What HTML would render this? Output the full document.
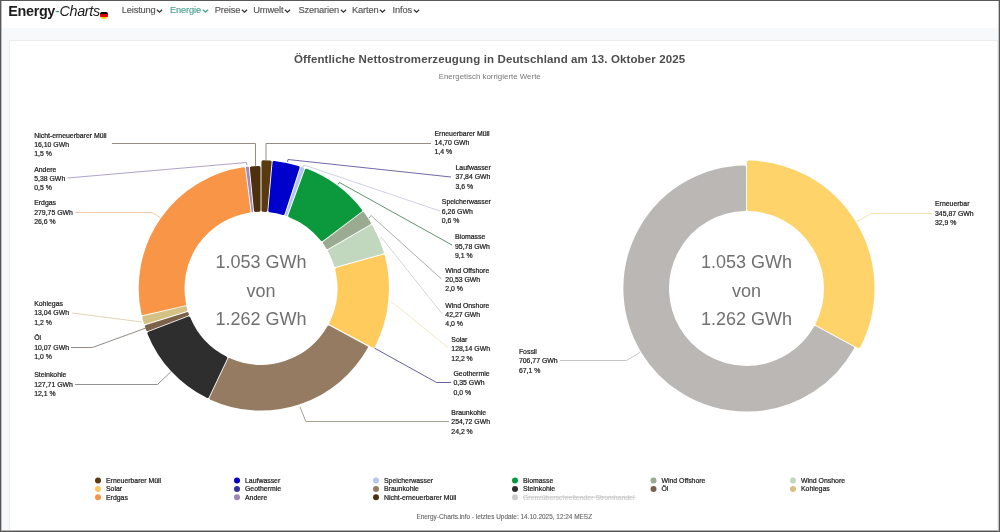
<!DOCTYPE html>
<html><head><meta charset="utf-8">
<style>
*{margin:0;padding:0;box-sizing:border-box}
html,body{width:1000px;height:532px;overflow:hidden;background:#f8f9fa;font-family:"Liberation Sans",sans-serif}
#wrap{position:absolute;left:0;top:0;width:1000px;height:532px;will-change:transform}
#frame{position:absolute;left:0;top:0;width:1000px;height:532px;border:1px solid #585858;box-shadow:inset 1px 0 0 #bdbdbd, inset -1px 0 0 #c4c4c4, inset 0 -1px 0 #b0b0b0;z-index:10;pointer-events:none}
#nav{position:absolute;left:0;top:0;width:1000px;height:28px;background:#fff}
#logo{position:absolute;left:8.3px;top:3.2px;font-size:14.4px;line-height:17px;color:#1e1e1e;white-space:nowrap;letter-spacing:-0.35px}
#logo b{font-weight:bold}
#logo .d{color:#3a9a8c}
#logo i{font-style:italic}
#flag{position:absolute;left:100px;top:12px;width:8px;height:7px;border-radius:2px 2px 4px 4px;overflow:hidden}
#flag div{height:33.4%}
.nv{position:absolute;top:5px;line-height:11px;font-size:9.3px;letter-spacing:-0.15px;color:#555;-webkit-text-stroke:0.15px currentColor;white-space:nowrap}
.nv.a{color:#4aa292}
.nv svg{display:inline-block;vertical-align:middle;margin-left:1px}
#card{position:absolute;left:9px;top:39.5px;width:989px;height:493px;background:#fff;border:1px solid #eaebed;border-right-color:#f0f1f2}
#title{position:absolute;left:0;top:52px;width:979.2px;line-height:14px;text-align:center;font-size:11.5px;letter-spacing:0.12px;color:#4e4e4e;font-weight:bold;white-space:nowrap}
#sub{position:absolute;left:0;top:72px;width:979.4px;line-height:9px;text-align:center;font-size:7.9px;color:#777;white-space:nowrap}
#foot{position:absolute;left:0;top:513px;width:1008.5px;line-height:8px;text-align:center;font-size:6.45px;color:#666;-webkit-text-stroke:0.12px #666;white-space:nowrap}
svg#chart{position:absolute;left:0;top:0}
.lb{font-size:6.9px;fill:#1c1c1c;stroke:#1c1c1c;stroke-width:0.22px}
.ct{font-size:18px;fill:#707070}
.lg{font-size:6.9px;fill:#1e1e1e;stroke:#1e1e1e;stroke-width:0.22px}
.lg.off{fill:#c8c8c8;stroke:#c8c8c8;stroke-width:0.1px}
</style></head><body><div id="wrap">
<div id="nav">
  <div id="logo"><b>Energy</b><span class="d">-</span><i>Charts</i></div>
  <div id="flag"><div style="background:#000"></div><div style="background:#dd0000"></div><div style="background:#ffce00"></div></div>
  <div class="nv" style="left:121.7px">Leistung<svg width="7" height="6" viewBox="0 0 7 6" style="margin-left:0.5px;vertical-align:-0.5px"><path d="M0.9,1.7 L3.5,4.2 L6.1,1.7" fill="none" stroke="#333" stroke-width="1.3"/></svg></div>
<div class="nv a" style="left:170px">Energie<svg width="7" height="6" viewBox="0 0 7 6" style="margin-left:0.5px;vertical-align:-0.5px"><path d="M0.9,1.7 L3.5,4.2 L6.1,1.7" fill="none" stroke="#4aa292" stroke-width="1.3"/></svg></div>
<div class="nv" style="left:214.8px">Preise<svg width="7" height="6" viewBox="0 0 7 6" style="margin-left:0.5px;vertical-align:-0.5px"><path d="M0.9,1.7 L3.5,4.2 L6.1,1.7" fill="none" stroke="#333" stroke-width="1.3"/></svg></div>
<div class="nv" style="left:253.3px">Umwelt<svg width="7" height="6" viewBox="0 0 7 6" style="margin-left:0.5px;vertical-align:-0.5px"><path d="M0.9,1.7 L3.5,4.2 L6.1,1.7" fill="none" stroke="#333" stroke-width="1.3"/></svg></div>
<div class="nv" style="left:298.5px">Szenarien<svg width="7" height="6" viewBox="0 0 7 6" style="margin-left:0.5px;vertical-align:-0.5px"><path d="M0.9,1.7 L3.5,4.2 L6.1,1.7" fill="none" stroke="#333" stroke-width="1.3"/></svg></div>
<div class="nv" style="left:352px">Karten<svg width="7" height="6" viewBox="0 0 7 6" style="margin-left:0.5px;vertical-align:-0.5px"><path d="M0.9,1.7 L3.5,4.2 L6.1,1.7" fill="none" stroke="#333" stroke-width="1.3"/></svg></div>
<div class="nv" style="left:392.6px">Infos<svg width="7" height="6" viewBox="0 0 7 6" style="margin-left:0.5px;vertical-align:-0.5px"><path d="M0.9,1.7 L3.5,4.2 L6.1,1.7" fill="none" stroke="#333" stroke-width="1.3"/></svg></div>

</div>
<div id="card"></div>
<div id="title">Öffentliche Nettostromerzeugung in Deutschland am 13. Oktober 2025</div>
<div id="sub">Energetisch korrigierte Werte</div>
<svg id="chart" width="1000" height="532" viewBox="0 0 1000 532">
<path d="M263.05,161.92 A126.40,126.40 0 0 1 270.03,162.22 L265.80,210.35 A78.10,78.10 0 0 0 263.05,210.23 Z" fill="#5a3a10" stroke="#5a3a10" stroke-width="3.20" stroke-linejoin="round"/>
<path d="M274.12,162.58 A126.40,126.40 0 0 1 298.04,167.45 L283.14,213.40 A78.10,78.10 0 0 0 269.88,210.71 Z" fill="#0000cd" stroke="#0000cd" stroke-width="3.20" stroke-linejoin="round"/>
<path d="M301.45,167.74 A127.17,127.17 0 0 1 303.52,168.45 L286.38,215.25 A77.33,77.33 0 0 0 286.07,215.15 Z" fill="#b4c6f0" stroke="#b4c6f0" stroke-width="1.66" stroke-linejoin="round"/>
<path d="M306.38,170.33 A126.40,126.40 0 0 1 360.52,210.37 L322.00,239.53 A78.10,78.10 0 0 0 289.77,215.69 Z" fill="#0c983c" stroke="#0c983c" stroke-width="3.20" stroke-linejoin="round"/>
<path d="M362.99,213.64 A126.40,126.40 0 0 1 369.30,223.12 L327.51,247.36 A78.10,78.10 0 0 0 324.48,242.80 Z" fill="#9aab92" stroke="#9aab92" stroke-width="3.20" stroke-linejoin="round"/>
<path d="M371.36,226.67 A126.40,126.40 0 0 1 382.14,252.22 L335.62,265.26 A78.10,78.10 0 0 0 329.56,250.90 Z" fill="#c2d8be" stroke="#c2d8be" stroke-width="3.20" stroke-linejoin="round"/>
<path d="M383.25,256.17 A126.40,126.40 0 0 1 373.38,346.15 L330.80,323.35 A78.10,78.10 0 0 0 336.73,269.20 Z" fill="#ffcb5c" stroke="#ffcb5c" stroke-width="3.20" stroke-linejoin="round"/>
<path d="M366.30,347.29 A120.70,120.70 0 0 1 211.09,398.20 L229.36,359.71 A78.10,78.10 0 0 0 328.78,327.10 Z" fill="#947b61" stroke="#947b61" stroke-width="3.20" stroke-linejoin="round"/>
<path d="M207.38,396.44 A120.70,120.70 0 0 1 149.01,333.31 L188.81,318.10 A78.10,78.10 0 0 0 225.66,357.95 Z" fill="#2e2e2e" stroke="#2e2e2e" stroke-width="3.20" stroke-linejoin="round"/>
<path d="M147.53,329.52 A120.73,120.73 0 0 1 146.47,326.49 L187.17,313.67 A78.07,78.07 0 0 0 187.38,314.28 Z" fill="#7b6249" stroke="#7b6249" stroke-width="3.14" stroke-linejoin="round"/>
<path d="M145.27,322.59 A120.70,120.70 0 0 1 143.88,317.49 L185.40,307.89 A78.10,78.10 0 0 0 185.92,309.80 Z" fill="#d5c184" stroke="#d5c184" stroke-width="3.20" stroke-linejoin="round"/>
<path d="M142.96,313.49 A120.70,120.70 0 0 1 243.54,168.87 L248.98,211.13 A78.10,78.10 0 0 0 184.47,303.89 Z" fill="#f89546" stroke="#f89546" stroke-width="3.20" stroke-linejoin="round"/>
<path d="M246.55,167.52 A121.64,121.64 0 0 1 248.22,167.33 L252.49,211.61 A77.16,77.16 0 0 0 252.24,211.64 Z" fill="#a189bb" stroke="#a189bb" stroke-width="1.32" stroke-linejoin="round"/>
<path d="M251.46,167.98 A120.70,120.70 0 0 1 258.95,167.62 L258.95,210.23 A78.10,78.10 0 0 0 255.55,210.39 Z" fill="#4d310e" stroke="#4d310e" stroke-width="3.20" stroke-linejoin="round"/>
<path d="M748.55,162.12 A126.40,126.40 0 0 1 858.76,346.59 L817.10,324.17 A79.10,79.10 0 0 0 748.55,209.43 Z" fill="#fdd36a" stroke="#fdd36a" stroke-width="3.20" stroke-linejoin="round"/>
<path d="M852.50,347.87 A121.50,121.50 0 1 1 744.45,167.02 L744.45,209.43 A79.10,79.10 0 1 0 815.16,327.78 Z" fill="#bbb7b4" stroke="#bbb7b4" stroke-width="3.20" stroke-linejoin="round"/>
<path d="M266.0,161.0 L266.0,143.5 L431.0,143.5" fill="none" stroke="#8d877c" stroke-width="0.95"/>
<path d="M255.5,166.0 L255.5,143.5 L112.0,143.5" fill="none" stroke="#8d877c" stroke-width="0.95"/>
<path d="M287.5,162.0 L288.0,159.5 L451.0,177.0" fill="none" stroke="#6a5fa0" stroke-width="0.95"/>
<path d="M303.0,167.0 L304.0,165.0 L440.0,211.0" fill="none" stroke="#cdd0e0" stroke-width="0.95"/>
<path d="M338.0,184.5 L339.5,182.5 L452.0,245.0" fill="none" stroke="#5a8c68" stroke-width="0.95"/>
<path d="M369.0,218.0 L371.0,215.5 L441.5,279.0" fill="none" stroke="#a3aa9f" stroke-width="0.95"/>
<path d="M380.0,239.5 L381.5,237.5 L442.5,314.3" fill="none" stroke="#cfd8cc" stroke-width="0.95"/>
<path d="M391.0,302.0 L394.5,304.0 L448.4,348.0" fill="none" stroke="#f3e6c0" stroke-width="0.95"/>
<path d="M374.6,348.2 L436.6,382.5 L451.0,382.5" fill="none" stroke="#5a5a98" stroke-width="0.95"/>
<path d="M300.0,406.8 L305.8,421.5 L449.0,421.5" fill="none" stroke="#a29a8e" stroke-width="0.95"/>
<path d="M171.0,371.7 L157.5,384.5 L75.0,384.5" fill="none" stroke="#8c8c8c" stroke-width="0.95"/>
<path d="M146.0,328.0 L92.4,347.5 L71.0,347.5" fill="none" stroke="#8a847c" stroke-width="0.95"/>
<path d="M142.0,322.0 L71.7,313.0" fill="none" stroke="#ddd2b0" stroke-width="0.95"/>
<path d="M160.0,217.5 L152.0,212.5 L75.0,212.5" fill="none" stroke="#f3c4a0" stroke-width="0.95"/>
<path d="M247.0,165.0 L246.5,162.5 L67.5,178.0" fill="none" stroke="#ab9dc6" stroke-width="0.95"/>
<path d="M857.0,221.6 L871.0,213.5 L931.6,213.5" fill="none" stroke="#f3e2a6" stroke-width="0.95"/>
<path d="M640.0,352.4 L626.4,360.5 L560.0,360.5" fill="none" stroke="#c6c3c0" stroke-width="0.95"/>
<text x="34.2" y="137.5" class="lb">Nicht-erneuerbarer Müll</text>
<text x="34.2" y="146.9" class="lb">16,10 GWh</text>
<text x="34.2" y="156.3" class="lb">1,5 %</text>
<text x="34.2" y="171.5" class="lb">Andere</text>
<text x="34.2" y="180.9" class="lb">5,38 GWh</text>
<text x="34.2" y="190.3" class="lb">0,5 %</text>
<text x="34.2" y="205.2" class="lb">Erdgas</text>
<text x="34.2" y="214.6" class="lb">279,75 GWh</text>
<text x="34.2" y="224.0" class="lb">26,6 %</text>
<text x="34.2" y="306.0" class="lb">Kohlegas</text>
<text x="34.2" y="315.4" class="lb">13,04 GWh</text>
<text x="34.2" y="324.8" class="lb">1,2 %</text>
<text x="34.2" y="340.1" class="lb">Öl</text>
<text x="34.2" y="349.5" class="lb">10,07 GWh</text>
<text x="34.2" y="358.9" class="lb">1,0 %</text>
<text x="34.2" y="377.4" class="lb">Steinkohle</text>
<text x="34.2" y="386.8" class="lb">127,71 GWh</text>
<text x="34.2" y="396.2" class="lb">12,1 %</text>
<text x="434.5" y="135.5" class="lb">Erneuerbarer Müll</text>
<text x="434.5" y="144.9" class="lb">14,70 GWh</text>
<text x="434.5" y="154.3" class="lb">1,4 %</text>
<text x="455.5" y="170.0" class="lb">Laufwasser</text>
<text x="455.5" y="179.4" class="lb">37,84 GWh</text>
<text x="455.5" y="188.8" class="lb">3,6 %</text>
<text x="441.8" y="204.2" class="lb">Speicherwasser</text>
<text x="441.8" y="213.6" class="lb">6,26 GWh</text>
<text x="441.8" y="223.0" class="lb">0,6 %</text>
<text x="455.0" y="239.2" class="lb">Biomasse</text>
<text x="455.0" y="248.6" class="lb">95,78 GWh</text>
<text x="455.0" y="258.0" class="lb">9,1 %</text>
<text x="445.3" y="272.5" class="lb">Wind Offshore</text>
<text x="445.3" y="281.9" class="lb">20,53 GWh</text>
<text x="445.3" y="291.3" class="lb">2,0 %</text>
<text x="445.3" y="307.5" class="lb">Wind Onshore</text>
<text x="445.3" y="316.9" class="lb">42,27 GWh</text>
<text x="445.3" y="326.3" class="lb">4,0 %</text>
<text x="451.3" y="341.9" class="lb">Solar</text>
<text x="451.3" y="351.3" class="lb">128,14 GWh</text>
<text x="451.3" y="360.7" class="lb">12,2 %</text>
<text x="453.5" y="375.8" class="lb">Geothermie</text>
<text x="453.5" y="385.2" class="lb">0,35 GWh</text>
<text x="453.5" y="394.6" class="lb">0,0 %</text>
<text x="451.3" y="414.8" class="lb">Braunkohle</text>
<text x="451.3" y="424.2" class="lb">254,72 GWh</text>
<text x="451.3" y="433.6" class="lb">24,2 %</text>
<text x="935.0" y="206.3" class="lb">Erneuerbar</text>
<text x="935.0" y="215.7" class="lb">345,87 GWh</text>
<text x="935.0" y="225.1" class="lb">32,9 %</text>
<text x="518.9" y="353.7" class="lb">Fossil</text>
<text x="518.9" y="363.1" class="lb">706,77 GWh</text>
<text x="518.9" y="372.5" class="lb">67,1 %</text>
<text x="261.0" y="267.9" class="ct" text-anchor="middle">1.053 GWh</text>
<text x="261.0" y="296.5" class="ct" text-anchor="middle">von</text>
<text x="261.0" y="325.1" class="ct" text-anchor="middle">1.262 GWh</text>
<text x="746.5" y="267.9" class="ct" text-anchor="middle">1.053 GWh</text>
<text x="746.5" y="296.5" class="ct" text-anchor="middle">von</text>
<text x="746.5" y="325.1" class="ct" text-anchor="middle">1.262 GWh</text>
<circle cx="98.0" cy="480.6" r="3" fill="#5a3a10"/>
<text x="106.0" y="483.0" class="lg">Erneuerbarer Müll</text>
<circle cx="98.0" cy="488.9" r="3" fill="#fcc860"/>
<text x="106.0" y="491.3" class="lg">Solar</text>
<circle cx="98.0" cy="497.2" r="3" fill="#f5944a"/>
<text x="106.0" y="499.6" class="lg">Erdgas</text>
<circle cx="237.0" cy="480.6" r="3" fill="#0000c0"/>
<text x="245.0" y="483.0" class="lg">Laufwasser</text>
<circle cx="237.0" cy="488.9" r="3" fill="#333399"/>
<text x="245.0" y="491.3" class="lg">Geothermie</text>
<circle cx="237.0" cy="497.2" r="3" fill="#9f86b7"/>
<text x="245.0" y="499.6" class="lg">Andere</text>
<circle cx="376.0" cy="480.6" r="3" fill="#b4c6f0"/>
<text x="384.0" y="483.0" class="lg">Speicherwasser</text>
<circle cx="376.0" cy="488.9" r="3" fill="#947b61"/>
<text x="384.0" y="491.3" class="lg">Braunkohle</text>
<circle cx="376.0" cy="497.2" r="3" fill="#4d310e"/>
<text x="384.0" y="499.6" class="lg">Nicht-erneuerbarer Müll</text>
<circle cx="515.0" cy="480.6" r="3" fill="#0c983c"/>
<text x="523.0" y="483.0" class="lg">Biomasse</text>
<circle cx="515.0" cy="488.9" r="3" fill="#2e2e2e"/>
<text x="523.0" y="491.3" class="lg">Steinkohle</text>
<circle cx="515.0" cy="497.2" r="3" fill="#cccccc"/>
<text x="523.0" y="499.6" class="lg off">Grenzüberschreitender Stromhandel</text>
<line x1="523.0" y1="497.2" x2="635.5" y2="497.2" stroke="#c8c8c8" stroke-width="0.8"/>
<circle cx="653.5" cy="480.6" r="3" fill="#9aab92"/>
<text x="661.5" y="483.0" class="lg">Wind Offshore</text>
<circle cx="653.5" cy="488.9" r="3" fill="#7b6249"/>
<text x="661.5" y="491.3" class="lg">Öl</text>
<circle cx="793.0" cy="480.6" r="3" fill="#c2d8be"/>
<text x="801.0" y="483.0" class="lg">Wind Onshore</text>
<circle cx="793.0" cy="488.9" r="3" fill="#d9c080"/>
<text x="801.0" y="491.3" class="lg">Kohlegas</text>
</svg>
<div id="foot">Energy-Charts.info - letztes Update: 14.10.2025, 12:24 MESZ</div>
<div id="frame"></div>
</div></body></html>
